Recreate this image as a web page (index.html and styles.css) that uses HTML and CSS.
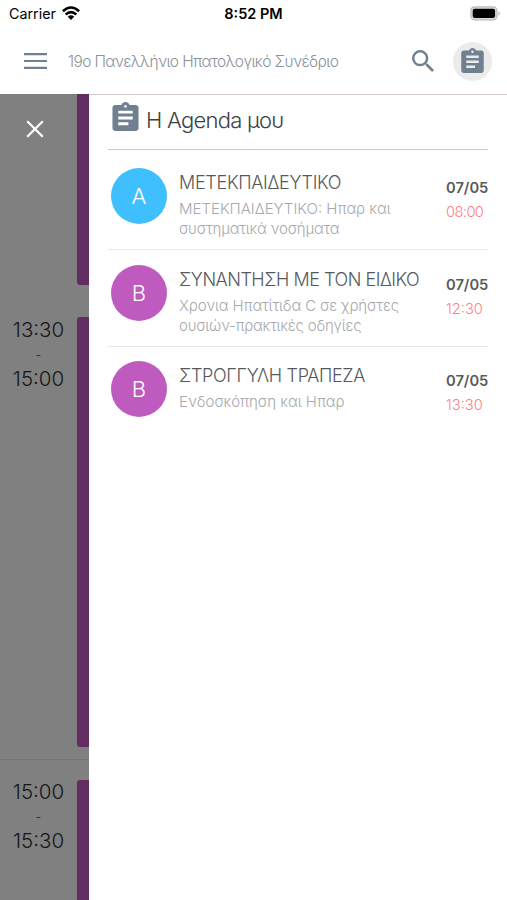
FILE: index.html
```html
<!DOCTYPE html>
<html lang="el">
<head>
<meta charset="utf-8">
<title>Η Agenda μου</title>
<link rel="stylesheet" href="styles.css">
</head>
<body>
<svg class="defs" aria-hidden="true">
  <symbol id="clipboard" viewBox="3 1 18 20">
    <path d="M19 3h-4.18C14.4 1.84 13.3 1 12 1s-2.400.84-2.820 2H5c-1.100 0-2 .9-2 2v14c0 1.100.9 2 2 2h14c1.100 0 2-.9 2-2V5c0-1.100-.9-2-2-2zm-7 0c.55 0 1 .45 1 1s-.45 1-1 1-1-.45-1-1 .45-1 1-1zm2 14H7v-2h7v2zm3-4H7v-2h10v2zm0-4H7V7h10v2z"/>
  </symbol>
</svg>
<div class="status">
  <div class="carrier"><span>Carrier</span>
    <svg class="wifi" viewBox="0 0 18 14"><g fill="none" stroke="#000" stroke-width="2.600"><path d="M.9 5.200Q9-2.200 17.100 5.200"/><path d="M3.700 8.500Q9 3.700 14.300 8.500"/></g><path d="M5.800 10.700Q9 8 12.200 10.700L9 14z"/></svg>
  </div>
  <div class="clock">8:52 PM</div>
  <svg class="battery" viewBox="0 0 31 15"><rect x=".9" y=".9" width="26" height="13" rx="3.600" fill="#ddd" stroke="#bbb" stroke-width="1.200"/><rect x="2.700" y="2.700" width="22.400" height="9.400" rx="2"/><path d="M28.600 5q2 2.500 0 5z" fill="#999"/></svg>
</div>
<header class="bar">
  <svg class="menu" viewBox="0 0 23 16"><path d="M0 1.200h23M0 8h23M0 14.800h23" stroke="#708090" stroke-width="2.200"/></svg>
  <h1 class="heading">19ο Πανελλήνιο Ηπατολογικό Συνέδριο</h1>
  <svg class="search" viewBox="3 3 17.500 17.500"><path d="M15.500 14h-.79l-.28-.27A6.471 6.471 0 0 0 16 9.500 6.500 6.500 0 1 0 9.500 16c1.610 0 3.090-.59 4.230-1.570l.27.28v.79l5 4.990L20.490 19l-4.990-5zm-6 0C7.010 14 5 11.990 5 9.500S7.010 5 9.500 5 14 7.010 14 9.500 11.990 14 9.500 14z"/></svg>
  <div class="round"><svg class="clip-small"><use href="#clipboard"/></svg></div>
</header>
<main class="screen">
  <aside class="schedule">
    <svg class="close" viewBox="0 0 18 18"><path d="M1.200 1.200l15.600 15.600M16.800 1.200L1.200 16.800" stroke="#fff" stroke-width="2.200"/></svg>
    <section class="slot first"><div class="times"></div><div class="stripe"></div></section>
    <section class="slot second"><div class="times"><span>13:30</span><i>-</i><span>15:00</span></div><div class="stripe"></div></section>
    <section class="slot third"><div class="times"><span>15:00</span><i>-</i><span>15:30</span></div><div class="stripe"></div></section>
  </aside>
  <div class="panel">
    <div class="agenda">
      <svg class="clip-large"><use href="#clipboard"/></svg>
      <h2 class="title">Η Agenda μου</h2>
    </div>
    <article class="item">
      <div class="avatar blue">A</div>
      <div class="text"><h3 class="t1">ΜΕΤΕΚΠΑΙΔΕΥΤΙΚΟ</h3><p class="d1">ΜΕΤΕΚΠΑΙΔΕΥΤΙΚΟ: Ηπαρ και</p><p class="d2">συστηματικά νοσήματα</p></div>
      <div class="when"><b>07/05</b><time class="wide">08:00</time></div>
    </article>
    <article class="item">
      <div class="avatar">B</div>
      <div class="text"><h3 class="t2">ΣΥΝΑΝΤΗΣΗ ΜΕ ΤΟΝ ΕΙΔΙΚΟ</h3><p class="d3">Χρονια Ηπατίτιδα C σε χρήστες</p><p class="d4">ουσιών-πρακτικές οδηγίες</p></div>
      <div class="when"><b>07/05</b><time>12:30</time></div>
    </article>
    <article class="item">
      <div class="avatar">B</div>
      <div class="text"><h3 class="t3">ΣΤΡΟΓΓΥΛΗ ΤΡΑΠΕΖΑ</h3><p class="d5">Ενδοσκόπηση και Ηπαρ</p></div>
      <div class="when"><b>07/05</b><time>13:30</time></div>
    </article>
  </div>
</main>
</body>
</html>
```
FILE: styles.css
```css
* { box-sizing: border-box; }
body { margin: 0; width: 507px; height: 900px; overflow: hidden; display: flex; flex-direction: column; background: #fff; font-family: Inter, "Liberation Sans", sans-serif; font-weight: 300; }
h1, h2, h3, p { margin: 0; font-weight: 300; white-space: nowrap; }
svg { display: block; flex: none; }
.defs { position: absolute; width: 0; height: 0; }
.status { height: 27px; flex: none; display: grid; grid-template-columns: 1fr auto 1fr; align-items: center; padding: 0 6px 0 9px; color: #000; }
.carrier { display: flex; align-items: center; gap: 6px; font-size: 14.300px; font-weight: 400; }
.wifi { width: 18px; height: 14px; margin-top: -2px; }
.clock { font-size: 14.500px; font-weight: 600; margin-right: 3px; }
.battery { width: 31px; height: 15px; justify-self: end; margin-top: -1px; }
.bar { height: 67px; flex: none; display: flex; align-items: center; padding: 1px 15px 0 24px; fill: #708090; }
.menu { width: 23px; height: 16px; }
.heading { flex: 1; margin-left: 21px; padding-top: 1px; font-size: 15.500px; letter-spacing: -.62px; color: #8b929a; }
.search { width: 22px; height: 22px; margin-right: 19px; }
.round { width: 39px; height: 39px; border-radius: 50%; background: #ebebeb; display: grid; place-items: center; }
.clip-small { width: 23px; height: 25px; margin-top: -2px; }
.screen { flex: 1; min-height: 0; display: flex; }
.schedule { position: relative; width: 89px; flex: none; background: #808080; display: flex; flex-direction: column; }
.close { position: absolute; left: 26px; top: 26px; width: 18px; height: 18px; }
.slot { display: flex; flex: none; }
.first { height: 191px; }
.second { height: 430px; margin-top: 32px; }
.third { height: 142px; margin-top: 12px; padding-top: 20px; border-top: 1px solid #757575; }
.times { width: 77px; padding-top: 1px; display: flex; flex-direction: column; align-items: center; font-size: 20.500px; line-height: 24px; color: #171717; }
.third .times { padding-top: 0; }
.times i { font-style: normal; font-size: 12px; line-height: 25px; }
.stripe { width: 12px; background: #622d62; border-radius: 3px 0 0 3px; }
.first .stripe { border-radius: 0 0 0 3px; }
.third .stripe { border-radius: 3px 0 0 0; }
.panel { width: 418px; padding: 0 19px; border-top: 1px solid #d3c7d3; }
.agenda { height: 55px; display: flex; align-items: flex-start; gap: 8px; padding: 7px 0 0 4px; border-bottom: 1px solid #c8c8c8; fill: #708090; }
.clip-large { width: 27px; height: 29px; }
.title { margin-left: -1px; font-size: 22px; letter-spacing: -.75px; line-height: 36px; color: #3c4045; }
.item { height: 97px; display: flex; padding: 15px 0 0 3px; border-bottom: 1px solid #e8e8e8; }
.agenda + .item { height: 100px; padding-top: 18px; }
.item:last-child { padding-top: 14px; border: 0; }
.avatar { width: 56px; height: 56px; flex: none; border-radius: 50%; background: #bf5abf; color: #fff; font-size: 22px; display: grid; place-items: center; }
.blue { background: #40bfff; }
.text { flex: 1; min-width: 0; margin-left: 12px; padding-top: 3px; color: #a6a9ad; font-size: 15px; line-height: 20px; }
.text h3 { margin-bottom: 4px; font-size: 18px; line-height: 24px; color: #56595c; }
.text .t1 { letter-spacing: -.3px; }
.text .t2 { letter-spacing: -.48px; }
.text .t3 { letter-spacing: -.35px; }
.d2, .d4 { letter-spacing: -.2px; }
.d3 { letter-spacing: -.1px; }
.when { width: 42px; padding-top: 10px; display: flex; flex-direction: column; font-size: 14.700px; line-height: 20px; color: #565a5c; }
.when b { font-weight: 600; }
.when time { margin-top: 4px; color: #ff7f7f; }
.when .wide { letter-spacing: -.6px; }
```
